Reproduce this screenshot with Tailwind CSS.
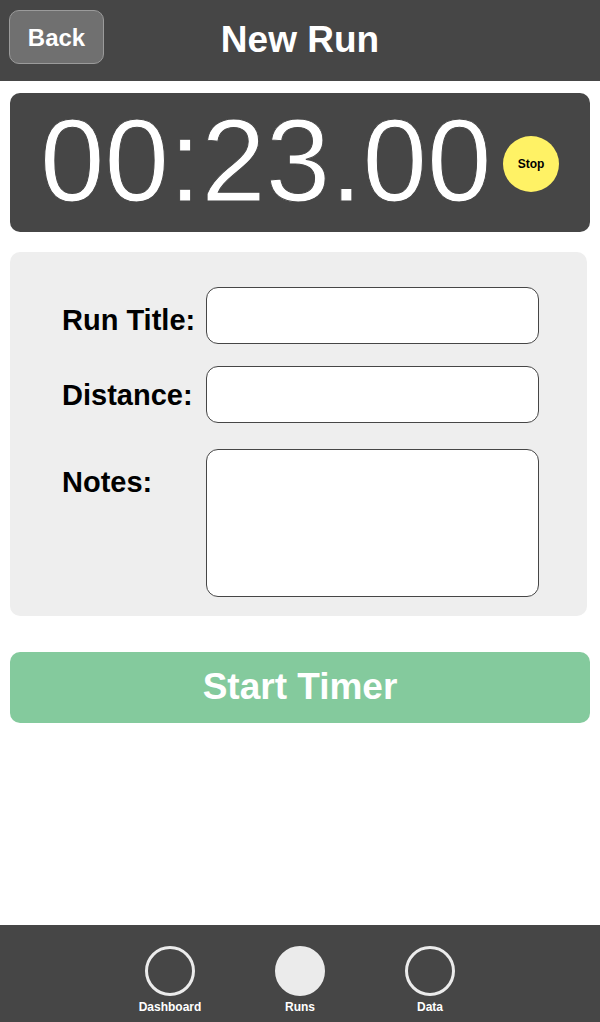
<!DOCTYPE html>
<html lang="en">
<head>
<meta charset="utf-8">
<meta name="viewport" content="width=device-width, initial-scale=1">
<title>New Run</title>
<script src="https://cdn.jsdelivr.net/npm/@tailwindcss/browser@4"></script>
</head>
<body class="flex min-h-screen flex-col bg-white font-['Liberation_Sans',Arial,sans-serif] font-bold text-black">
  <header class="grid grid-cols-[1fr_auto_1fr] items-start bg-[#464646] px-[9px] pt-[10px] pb-[11px] text-white">
    <button type="button" class="h-[54px] w-[95px] rounded-[10px] border border-[#9b9b9b] bg-[#707070] pt-0.5 text-2xl">Back</button>
    <h1 class="text-[37px] leading-[60px]">New Run</h1>
  </header>

  <main class="flex flex-1 flex-col px-[10px] pt-3">
    <section aria-label="Timer" class="flex h-[139px] items-center justify-between rounded-[10px] bg-[#464646] pt-0.5 pr-[31px] pl-[30px]">
      <!-- The stroke in the panel colour trims the digits to a light weight -->
      <time class="pb-1 text-[116px] leading-[133px] font-light text-white [-webkit-text-stroke:1px_#464646]">00:23.00</time>
      <button type="button" class="size-14 rounded-full bg-[#fff265] text-xs">Stop</button>
    </section>

    <form id="run" class="mt-5 mr-[3px] grid grid-cols-[144px_1fr] rounded-[10px] bg-[#eeeeee] pt-[35px] pr-12 pb-[19px] pl-[52px] text-[29px]">
      <label for="title" class="pt-4 leading-[34px] whitespace-nowrap">Run Title:</label>
      <input id="title" type="text" class="mb-[22px] h-[57px] w-full min-w-0 rounded-xl border border-[#464646] bg-white px-3 text-2xl font-normal">
      <label for="distance" class="pt-3 leading-[34px] whitespace-nowrap">Distance:</label>
      <input id="distance" type="text" class="mb-[26px] h-[57px] w-full min-w-0 rounded-xl border border-[#464646] bg-white px-3 text-2xl font-normal">
      <label for="notes" class="pt-4 leading-[34px] whitespace-nowrap">Notes:</label>
      <textarea id="notes" class="h-[148px] w-full min-w-0 resize-none rounded-xl border border-[#464646] bg-white p-3 text-2xl font-normal"></textarea>
    </form>

    <button type="submit" form="run" class="mt-9 h-[71px] rounded-[10px] bg-[#84ca9d] pb-px text-[37px] text-white">Start Timer</button>
  </main>

  <nav aria-label="Main" class="flex justify-center bg-[#464646] pt-[21px] pb-[7px] text-xs text-white">
    <a href="#dashboard" class="flex w-[130px] flex-col items-center gap-[3px]">
      <span class="size-[50px] rounded-full border-3 border-[#ebebeb]"></span>Dashboard
    </a>
    <a href="#runs" aria-current="page" class="flex w-[130px] flex-col items-center gap-[3px]">
      <span class="size-[50px] rounded-full border-3 border-[#ebebeb] bg-[#ebebeb]"></span>Runs
    </a>
    <a href="#data" class="flex w-[130px] flex-col items-center gap-[3px]">
      <span class="size-[50px] rounded-full border-3 border-[#ebebeb]"></span>Data
    </a>
  </nav>
</body>
</html>
